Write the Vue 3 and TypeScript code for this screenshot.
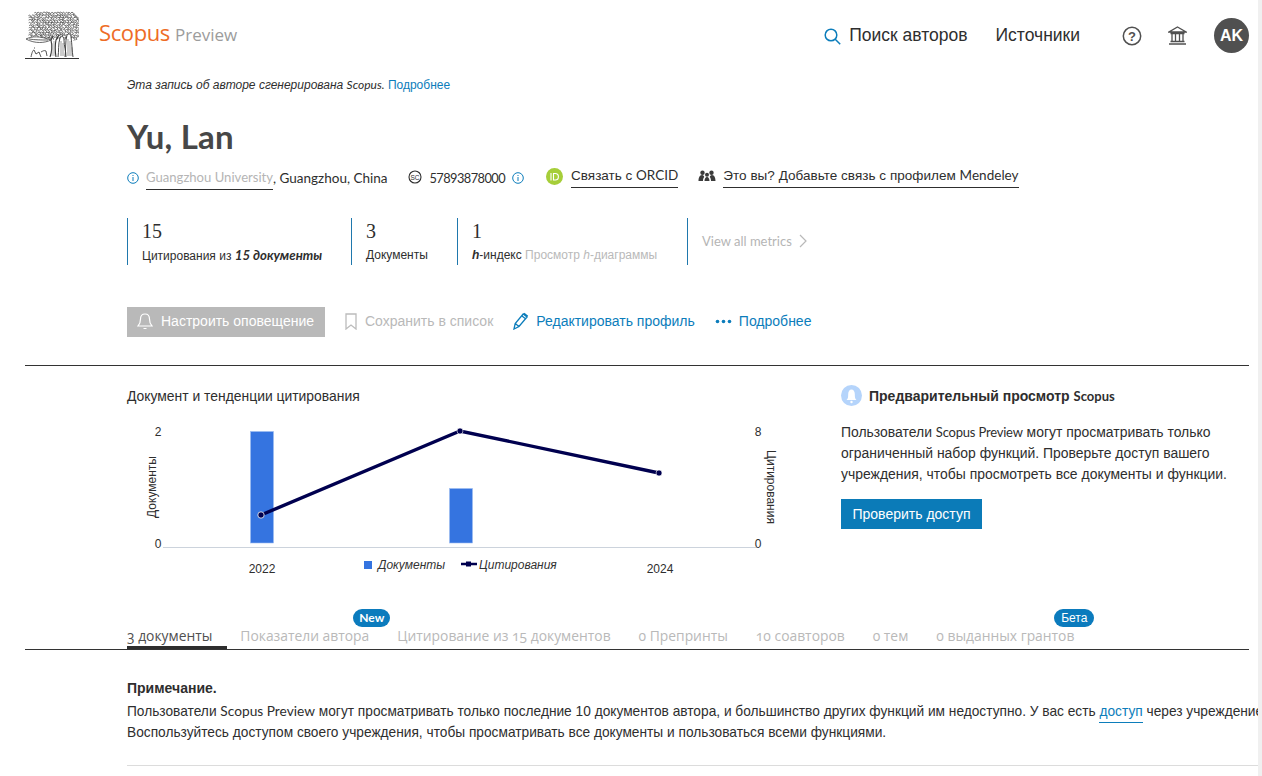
<script setup lang="ts">
function curls(): string {
  let d = ''
  let seed = 7
  const rnd = (): number => {
    seed = (seed * 9301 + 49297) % 233280
    return seed / 233280
  }
  for (let y = 1.500; y < 29; y += 2.500) {
    for (let x = 0.500; x < 53; x += 2.800) {
      const dx = (x - 27) / 27
      const dy = (y - 15) / 15
      if (dx * dx * dx * dx + dy * dy * dy * dy > 0.9) continue
      const a = x + rnd() * 0.8
      const b = y + rnd() * 0.8
      const r = 0.9 + rnd() * 0.7
      d += `M${a.toFixed(1)} ${b.toFixed(1)}q${r.toFixed(1)} ${(-r).toFixed(1)} ${(r * 2).toFixed(1)} 0t${(r * 0.8).toFixed(1)} ${r.toFixed(1)}t${(-r).toFixed(1)} ${(r * 0.5).toFixed(1)} `
    }
  }
  return d
}
const canopy = curls()
const tabs = [
  { n: '3', t: ' документы', active: true },
  { n: '', t: 'Показатели автора', badge: 'New' },
  { n: '', t: 'Цитирование из 15 документов' },
  { n: '0', t: ' Препринты' },
  { n: '10', t: ' соавторов' },
  { n: '0', t: ' тем' },
  { n: '0', t: ' выданных грантов', badge: 'Бета' },
]
</script>

<template>
  <div class="page">
    <div class="main">
      <header class="top">
        <svg class="logo" width="54" height="48" viewBox="0 0 54 48" aria-hidden="true">
          <path :d="canopy" fill="none" stroke="#3c3c3c" stroke-width=".7" />
          <path d="M1 28c6-3 14-3 25 1c-6 3-16 4-25-1zM4 28c6 1 12 1 19 1" fill="#fff" stroke="#444" stroke-width=".8" />
          <path d="M25 46c2-5 2-12 1-17l2-4M31 46c-1-6-1-12 0-17l3-5" fill="none" stroke="#333" stroke-width="1.100" />
          <path d="M27 32v13M29 30v15" stroke="#777" stroke-width=".6" />
          <path d="M33 46c1-6 0-13 2-19c2-3 4-1 4 2c0 6 2 11 2 17M40 46c1-7 0-15 2-22c2-2 4-1 4 2c1 7 1 14 2 20" fill="#fff" stroke="#383838" stroke-width=".9" />
          <path d="M36 30v15M38 32v13M43 28v17M45 30v15M47 36v9" stroke="#555" stroke-width=".6" />
          <path d="M6 46c1-5 2-7 3-7l2 4 3-2 2 5M16 41c2-1 3-2 5-1l1 5M9 37h1" fill="none" stroke="#444" stroke-width=".9" />
          <path d="M0 47.500h54" stroke="#333" stroke-width="1" />
        </svg>
        <div class="brand"><span class="scopus">Scopus</span> <span class="preview">Preview</span></div>
        <nav class="nav">
          <svg class="search" width="17" height="17" viewBox="0 0 17 17" aria-hidden="true"><circle cx="7" cy="7" r="5.800" fill="none" stroke="#0c7dbb" stroke-width="1.500" /><path d="M11.200 11.200l5 5" stroke="#0c7dbb" stroke-width="1.500" /></svg>
          <span class="nav-a">Поиск авторов</span>
          <span class="nav-b">Источники</span>
          <svg class="help" width="20" height="20" viewBox="0 0 20 20" aria-hidden="true"><circle cx="10" cy="10" r="8.700" fill="none" stroke="#505050" stroke-width="1.500" /><text x="10" y="14.500" text-anchor="middle" class="q">?</text></svg>
          <svg class="inst" width="19" height="19" viewBox="0 0 19 19" aria-hidden="true"><path d="M9.500 1L18 6H1zM2.500 7.500h14M4 8v7M7.500 8v7M11.500 8v7M15 8v7M2.500 15.500h14M1 18h17" fill="none" stroke="#505050" stroke-width="1.300" /></svg>
          <div class="avatar">AK</div>
        </nav>
      </header>

      <section class="profile">
        <p class="gen"><i>Эта запись об авторе сгенерирована <span class="lat">Scopus.</span></i> <span class="link">Подробнее</span></p>
        <h1 class="name">Yu, Lan</h1>
        <div class="meta">
          <svg class="ic" width="12" height="12" viewBox="0 0 12 12" aria-hidden="true"><circle cx="6" cy="6" r="5.300" fill="none" stroke="#0c7dbb" /><path d="M6 3v1M6 5v4" stroke="#0c7dbb" /></svg>
          <span class="uni lat">Guangzhou University</span><span class="lat place">, Guangzhou, China</span>
          <svg class="sc" width="14" height="14" viewBox="0 0 14 14" aria-hidden="true"><circle cx="7" cy="7" r="6" fill="none" stroke="#2e2e2e" stroke-width="1.100" /><text x="7" y="9.500" text-anchor="middle" class="sc-t">SC</text></svg>
          <span class="lat id">57893878000</span>
          <svg class="ic2" width="12" height="12" viewBox="0 0 12 12" aria-hidden="true"><circle cx="6" cy="6" r="5.300" fill="none" stroke="#0c7dbb" /><path d="M6 3v1M6 5v4" stroke="#0c7dbb" /></svg>
          <svg class="orcid" width="17" height="17" viewBox="0 0 17 17" aria-hidden="true"><circle cx="8.500" cy="8.500" r="8.500" fill="#a6ce39" /><path d="M5 5v7.500M7.500 5.500v6.500h1.700c2 0 3.200-1.300 3.200-3.300s-1.200-3.200-3.200-3.200z" fill="none" stroke="#fff" stroke-width="1.100" /></svg>
          <span class="ul orc">Связать с <span class="lat">ORCID</span></span>
          <svg class="mend" width="18" height="12" viewBox="0 0 18 12" aria-hidden="true"><circle cx="4.500" cy="2.700" r="2.200" fill="#3b3b3b" /><circle cx="13.500" cy="2.700" r="2.200" fill="#3b3b3b" /><circle cx="9" cy="4.800" r="2" fill="#3b3b3b" /><path d="M.5 11c0-3 1-6 3.500-6c1.500 0 2 1 2.200 2c-.8 1-1.200 2-1.200 4zM17.500 11c0-3-1-6-3.500-6c-1.500 0-2 1-2.200 2c.8 1 1.200 2 1.200 4zM6.500 11c0-2 1-4 2.500-4s2.500 2 2.500 4z" fill="#3b3b3b" /></svg>
          <span class="ul men">Это вы? Добавьте связь с профилем <span class="lat">Mendeley</span></span>
        </div>

        <div class="metrics">
          <div class="metric m1"><div class="num">15</div><div class="lbl">Цитирования из <b><i>15 документы</i></b></div></div>
          <div class="metric m2"><div class="num">3</div><div class="lbl">Документы</div></div>
          <div class="metric m3"><div class="num">1</div><div class="lbl"><i class="h">h</i>-индекс <span class="muted">Просмотр <i>h</i>-диаграммы</span></div></div>
          <div class="metric m4"><span class="all lat">View all metrics</span><svg width="8" height="14" viewBox="0 0 8 14" aria-hidden="true"><path d="M1 1l6 6-6 6" fill="none" stroke="#b9b9b9" stroke-width="1.200" /></svg></div>
        </div>

        <div class="actions">
          <button class="alert">
            <svg width="16" height="18" viewBox="0 0 16 18" aria-hidden="true"><path d="M1 14c2-2 2.500-3 2.500-7C3.500 3.500 5.500 2 8 2s4.500 1.500 4.500 5c0 4 .5 5 2.500 7zM6.500 16.500h3" fill="none" stroke="#fff" stroke-width="1.200" /></svg>
            Настроить оповещение
          </button>
          <span class="save">
            <svg width="12" height="17" viewBox="0 0 12 17" aria-hidden="true"><path d="M1 1h10v15l-5-4-5 4z" fill="none" stroke="#bcbcbc" stroke-width="1.300" /></svg>
            Сохранить в список
          </span>
          <span class="edit">
            <svg width="16" height="18" viewBox="0 0 16 18" aria-hidden="true"><path d="M1 17l1.200-5.500 8-9.500 3.800 3-8 9.500zM2.200 11.500l3.800 3M8.700 3.800l3.800 3M11 1.200l3.800 3" fill="none" stroke="#0c7dbb" stroke-width="1.300" /></svg>
            Редактировать профиль
          </span>
          <span class="more">
            <svg width="17" height="5" viewBox="0 0 17 5" aria-hidden="true"><circle cx="2.500" cy="2.500" r="1.800" fill="#0c7dbb" /><circle cx="8.500" cy="2.500" r="1.800" fill="#0c7dbb" /><circle cx="14.500" cy="2.500" r="1.800" fill="#0c7dbb" /></svg>
            Подробнее
          </span>
        </div>
      </section>

      <section class="trend">
        <div class="chart-col">
          <h2 class="chart-title">Документ и тенденции цитирования</h2>
          <svg class="chart" width="660" height="170" viewBox="127 415 660 170" role="img">
            <path d="M163 547.500h594" stroke="#ccd3dc" />
            <rect x="250.500" y="431.500" width="23" height="111.500" fill="#3574e0" stroke="#9dbcf0" stroke-width=".6" />
            <rect x="449.500" y="488.500" width="23" height="54.500" fill="#3574e0" stroke="#9dbcf0" stroke-width=".6" />
            <path d="M261 515L460 431L659 473" fill="none" stroke="#00004f" stroke-width="3.400" />
            <circle cx="261" cy="515" r="3.200" fill="#00004f" stroke="#fff" stroke-width=".8" />
            <circle cx="460" cy="431" r="3" fill="#00004f" stroke="#fff" stroke-width=".6" />
            <circle cx="659" cy="473" r="3" fill="#00004f" stroke="#fff" stroke-width=".6" />
            <text x="158" y="436" class="tick" text-anchor="middle">2</text>
            <text x="158" y="548" class="tick" text-anchor="middle">0</text>
            <text x="758" y="436" class="tick" text-anchor="middle">8</text>
            <text x="758" y="548" class="tick" text-anchor="middle">0</text>
            <text x="262" y="573" class="tick" text-anchor="middle">2022</text>
            <text x="660" y="573" class="tick" text-anchor="middle">2024</text>
            <text transform="translate(156 487) rotate(-90)" class="tick" text-anchor="middle">Документы</text>
            <text transform="translate(767 487) rotate(90)" class="tick" text-anchor="middle">Цитирования</text>
            <rect x="364" y="561" width="8" height="8" fill="#3574e0" />
            <text x="378" y="569" class="leg">Документы</text>
            <path d="M461 564h16" stroke="#00004f" stroke-width="2.500" />
            <rect x="466" y="561.500" width="5" height="5" fill="#00004f" />
            <text x="479" y="569" class="leg">Цитирования</text>
          </svg>
        </div>
        <aside class="side">
          <div class="side-head">
            <svg width="21" height="21" viewBox="0 0 21 21" aria-hidden="true"><circle cx="10.500" cy="10.500" r="10.500" fill="#b5d4fb" /><path d="M5.500 15c1.500-1 1.700-3 1.700-6 0-2.500 1.400-4.500 3.300-4.500s3.300 2 3.300 4.500c0 3 .2 5 1.700 6z" fill="#fff" /><circle cx="10.500" cy="17" r="1.200" fill="#fff" /></svg>
            <h3 class="side-title">Предварительный просмотр <span class="lat">Scopus</span></h3>
          </div>
          <p class="side-text">Пользователи <span class="lat">Scopus Preview</span> могут просматривать только<br />ограниченный набор функций. Проверьте доступ вашего<br />учреждения, чтобы просмотреть все документы и функции.</p>
          <button class="check">Проверить доступ</button>
        </aside>
      </section>

      <section class="tabs-wrap">
        <div class="tabs">
          <div v-for="tab in tabs" :key="tab.t" class="tab" :class="{ active: tab.active }">
            <span class="onum">{{ tab.n }}{{ tab.t }}</span>
            <span v-if="tab.badge" class="badge" :class="{ beta: tab.badge === 'Бета' }">{{ tab.badge }}</span>
          </div>
        </div>
      </section>

      <section class="note">
        <h4 class="note-title">Примечание.</h4>
        <p class="note-line">Пользователи <span class="lat">Scopus Preview</span> могут просматривать только последние 10 документов автора, и большинство других функций им недоступно. У вас есть <span class="access">доступ</span> через учреждение.</p>
        <p class="note-line">Воспользуйтесь доступом своего учреждения, чтобы просматривать все документы и пользоваться всеми функциями.</p>
      </section>
      <div class="rule"></div>
    </div>
    <div class="strip"></div>
  </div>
</template>

<style>
html, body { margin: 0; overflow: hidden; background: #fff; }
</style>

<style scoped>
.page { display: flex; width: 1262px; height: 776px; overflow: hidden; font-family: "Liberation Sans", Arial, sans-serif; color: #2e2e2e; }
.main { width: 1258px; flex: none; overflow: hidden; }
.strip { width: 4px; background: #f0f0f0; }
p, h1, h2, h3, h4 { margin: 0; }
.lat { font-family: Lato, "Liberation Sans", sans-serif; }

.top { display: flex; align-items: flex-start; height: 70px; padding: 11px 9px 0 25px; box-sizing: border-box; }
.logo { flex: none; }
.brand { margin: 6px 0 0 20px; white-space: nowrap; font-family: "Open Sans", sans-serif; }
.scopus { font-size: 22px; color: #ee6c26; letter-spacing: -.4px; }
.preview { font-size: 17px; color: #9c9c9c; margin-left: 1px; }
.nav { margin-left: auto; display: flex; align-items: center; height: 49px; font-size: 17.500px; color: #2e2e2e; }
.search { margin-right: 8px; margin-top: 2px; }
.nav-a { margin-right: 28px; }
.nav-b { margin-right: 42px; }
.help { margin-right: 26px; }
.q { font: bold 13px "Liberation Sans", sans-serif; fill: #505050; }
.inst { margin-right: 27px; }
.avatar { width: 35px; height: 35px; border-radius: 50%; background: #505050; color: #fff; font-weight: 700; font-size: 16px; display: flex; align-items: center; justify-content: center; }

.profile { height: 296px; box-sizing: border-box; border-bottom: 1px solid #333; margin-right: 9px; margin-left: 25px; padding-left: 102px; }
.gen { font-size: 12px; line-height: 30px; color: #2e2e2e; }
.gen .lat { font-size: 12px; }
.link { color: #0c7dbb; }
.name { font-family: Lato, sans-serif; font-size: 33px; font-weight: 700; color: #474747; line-height: 40px; margin-top: 16px; letter-spacing: .2px; }
.meta { display: flex; align-items: center; height: 28px; margin-top: 8px; font-size: 13.500px; white-space: nowrap; }
.ic { margin-right: 7px; }
.uni { align-self: flex-start; color: #b5b5b5; border-bottom: 1px solid #2e2e2e; font-size: 13.100px; line-height: 26px; height: 25px; }
.place { margin-right: 21px; }
.sc { margin-right: 7px; margin-top: -2px; }
.sc-t { font: 6.500px "Liberation Sans", sans-serif; fill: #2e2e2e; }
.id { margin-right: 7px; font-size: 12.800px; letter-spacing: -.55px; }
.ic2 { margin-right: 22px; }
.orcid { margin-right: 8px; margin-top: -4px; }
.ul { align-self: flex-start; border-bottom: 1px solid #2e2e2e; line-height: 23px; height: 23px; }
.orc { margin-right: 20px; }
.men { letter-spacing: .03px; }
.mend { margin-right: 7px; margin-top: -4px; }

.metrics { display: flex; align-items: stretch; height: 47px; margin-top: 26px; }
.metric { border-left: 1px solid #1f78ad; padding-left: 14px; box-sizing: border-box; }
.m1 { width: 224px; }
.m2 { width: 106px; }
.m3 { width: 230px; }
.m4 { padding: 0 0 2px 14px; display: flex; align-items: center; gap: 7px; }
.num { font-family: "Liberation Serif", serif; font-size: 20px; line-height: 26px; color: #2e2e2e; }
.lbl { font-size: 12px; line-height: 16px; margin-top: 3px; white-space: nowrap; }
.lbl b { font-family: Lato, sans-serif; font-size: 13.200px; }
.h { font-weight: 700; }
.muted { color: #b9b9b9; }
.all { font-size: 13px; color: #b5b5b5; }

.actions { display: flex; align-items: center; height: 30px; margin-top: 42px; font-size: 14px; white-space: nowrap; }
.alert { display: flex; align-items: center; gap: 8px; width: 198px; height: 30px; padding: 0 0 2px 10px; border: 0; background: #b9b9b9; color: #fff; font: inherit; }
.save { display: flex; align-items: center; gap: 8px; margin: 0 0 2px 20px; color: #b9b9b9; }
.edit { display: flex; align-items: center; gap: 7px; margin: 0 0 3px 20px; color: #0c7dbb; }
.more { display: flex; align-items: center; gap: 7px; margin: 0 0 2px 20px; color: #0c7dbb; }

.trend { display: flex; height: 230px; padding-left: 127px; }
.chart-col { width: 714px; flex: none; }
.chart-title { font-size: 13.900px; font-weight: 400; line-height: 20px; margin-top: 20px; color: #2e2e2e; }
.chart { display: block; margin-top: 9px; }
.tick { font: 12px "Liberation Sans", sans-serif; fill: #2e2e2e; }
.leg { font: italic 12px "Liberation Sans", sans-serif; fill: #333; }
.side { padding-top: 19px; }
.side-head { display: flex; align-items: center; gap: 7px; }
.side-title { font-size: 14px; font-weight: 700; color: #2e2e2e; white-space: nowrap; }
.side-title .lat { font-size: 13px; }
.side-text { font-size: 13.950px; line-height: 21px; margin-top: 16px; white-space: nowrap; color: #2e2e2e; }
.side-text .lat { font-size: 13px; letter-spacing: -.2px; }
.check { display: block; width: 141px; height: 30px; margin-top: 14px; border: 0; padding: 0; background: #0b7bb8; color: #fff; font: 14px "Liberation Sans", sans-serif; }

.tabs-wrap { margin: 0 9px 0 25px; border-bottom: 1px solid #333; height: 54px; box-sizing: border-box; padding: 0 0 0 102px; }
.tabs { display: flex; height: 53px; align-items: flex-end; }
.tab { position: relative; height: 38px; padding: 15px 15px 0 0; margin-right: 13px; box-sizing: border-box; color: #b9b9b9; font-family: "Open Sans", sans-serif; font-size: 13.850px; white-space: nowrap; line-height: 20px; }
.onum { font-variant-numeric: oldstyle-nums; }
.active { color: #505050; box-shadow: inset 0 -3px 0 #2e2e2e; }
.badge { position: absolute; top: -2px; right: -6px; height: 18px; padding: 0 6px; border-radius: 9px; background: #0b7bbd; color: #fff; font: 700 12px/18px Lato, sans-serif; }
.beta { right: -5px; font: 12px/18px "Liberation Sans", sans-serif; padding: 0 7px; }

.note { padding: 27px 0 0 127px; }
.note-title { font-size: 14px; font-weight: 700; line-height: 22px; color: #2e2e2e; }
.note-line { font-size: 13.720px; line-height: 20.500px; margin-top: 2px; white-space: nowrap; color: #2e2e2e; }
.note-line + .note-line { margin-top: 0; }
.access { color: #0c7dbb; border-bottom: 1px solid #0c7dbb; padding-bottom: 3px; }
.rule { margin: 22px 0 0 127px; height: 1px; background: #dcdcdc; }
</style>
